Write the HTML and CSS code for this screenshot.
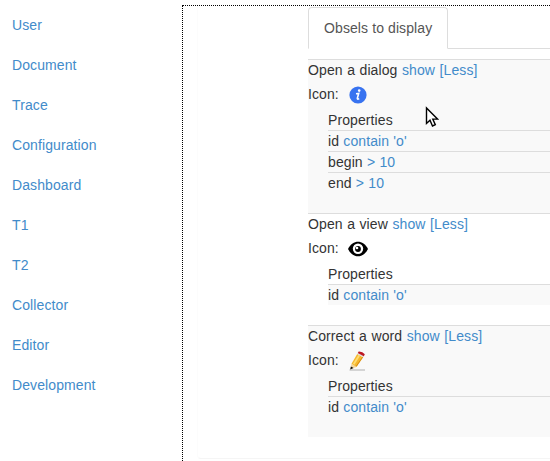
FILE: index.html
```html
<!DOCTYPE html>
<html lang="en">
<head>
<meta charset="utf-8">
<title>Obsels</title>
<link rel="stylesheet" href="styles.css">
</head>
<body>
<div class="layout">
  <nav class="sidebar">
    <a>User</a><a>Document</a><a>Trace</a><a>Configuration</a><a>Dashboard</a><a>T1</a><a>T2</a><a>Collector</a><a>Editor</a><a>Development</a>
  </nav>
  <main class="workspace">
    <div class="panel">
      <div class="tabs"><div class="tab">Obsels to display</div></div>
      <div class="obsels">
        <section class="obsel">
          <div class="title">Open a dialog <a>show</a> <a>[Less]</a></div>
          <div class="icon-row">Icon:
            <svg class="icon" width="20" height="20" viewBox="0 0 20 20"><circle cx="10" cy="10" r="8.6" fill="#3873f0"/><circle cx="11.2" cy="5.6" r="1.3" fill="#fff"/><path d="M8 8.7 10.7 8.4 9.3 13.4Q9.2 14.7 11.2 13.6" fill="none" stroke="#fff" stroke-width="1.6"/></svg>
          </div>
          <div class="props"><div>Properties</div><div>id <a>contain 'o'</a></div><div>begin <a>&gt; 10</a></div><div>end <a>&gt; 10</a></div></div>
        </section>
        <section class="obsel plain">
          <div class="title">Open a view <a>show</a> <a>[Less]</a></div>
          <div class="icon-row">Icon:
            <svg class="icon" width="20" height="20" viewBox="0 0 20 20"><path d="M0 10C5 .3 15 .3 20 10C15 19.7 5 19.7 0 10Z" fill="#000"/><circle cx="10" cy="9.8" r="5.2" fill="#fff"/><circle cx="10" cy="10" r="2.9" fill="#000"/><circle cx="9" cy="9" r="1.3" fill="#fff"/></svg>
          </div>
          <div class="props"><div>Properties</div><div>id <a>contain 'o'</a></div></div>
        </section>
        <section class="obsel">
          <div class="title">Correct a word <a>show</a> <a>[Less]</a></div>
          <div class="icon-row">Icon:
            <svg class="icon" width="20" height="20" viewBox="0 0 20 20"><path d="M1.5 19H17" stroke="#bbb" stroke-width="1.2"/><path d="M2.2 18.3 3.5 12.8 8.5 15.9Z" fill="#f3d7a0"/><path d="M3.5 12.8 9.2 3 15.2 6.2 8.5 15.9Z" fill="#f5b82e"/><path d="M5.7 13.2 11.3 4.2" stroke="#ffdc72" stroke-width="1.8"/><path d="M8.3 15.2 14.8 5.8" stroke="#d78a18"/><path d="M9.2 3 10 1.4 16 4.9 15.2 6.2Z" fill="#ddd"/><path d="M9.8 2 10.7.4Q14.5.2 16.8 3.2L15.8 5.2Z" fill="#bd1824"/><path d="M2.2 18.5 2.9 15.4 5.6 17Z" fill="#111"/></svg>
          </div>
          <div class="props"><div>Properties</div><div>id <a>contain 'o'</a></div></div>
        </section>
      </div>
    </div>
  </main>
</div>
<svg class="cursor" width="14" height="22" viewBox="0 0 14 22"><path d="M1.5 2V17.5L5 14.2 7.5 20 10.3 18.7 7.8 13.1H12.5Z" fill="#fff" stroke="#000" stroke-width="1.4"/></svg>
</body>
</html>
```
FILE: styles.css
```css
* { box-sizing: border-box; }
body {
  margin: 0;
  overflow: hidden;
  font: 14px/20px "Liberation Sans", Arial, sans-serif;
  letter-spacing: 0.1px;
  color: #333;
  background: #fff;
}
a { color: #428bca; }
.layout { display: flex; height: 461px; }
.sidebar { width: 182px; padding: 5px 12px; flex: none; }
.sidebar a { display: block; padding: 10px 0; }
.workspace {
  flex: 1;
  margin-top: 5px;
  padding-left: 14px;
  border: 1px dotted #000;
  border-width: 1px 0 0 1px;
}
.panel {
  height: 453px;
  padding: 1px 0 0 110px;
  border: 1px solid #f5f5f5;
  border-width: 0 0 1px 1px;
  border-left-color: #fcfcfc;
  border-bottom-left-radius: 4px;
}
.tabs { display: flex; height: 42px; border-bottom: 1px solid #ddd; }
.tab {
  width: 140px;
  height: 42px;
  padding: 10px 15px;
  border: 1px solid #ddd;
  border-bottom-color: #fff;
  border-radius: 4px 4px 0 0;
  background: #fff;
  color: #555;
  white-space: nowrap;
}
.obsels { margin-top: 10px; }
.obsel { padding-bottom: 20px; border-top: 1px solid #ddd; background: #f9f9f9; }
.plain { background: #fff; }
.title { height: 20px; word-spacing: 0.5px; }
.icon-row { display: flex; height: 30px; gap: 9px; padding-top: 4px; }
.icon { margin-top: 1px; }
.props { padding-left: 20px; word-spacing: 0.2px; }
.props div + div { border-top: 1px solid #ddd; }
.plain .props div + div { background: #f9f9f9; }
.cursor { position: absolute; left: 425px; top: 106px; }
```
